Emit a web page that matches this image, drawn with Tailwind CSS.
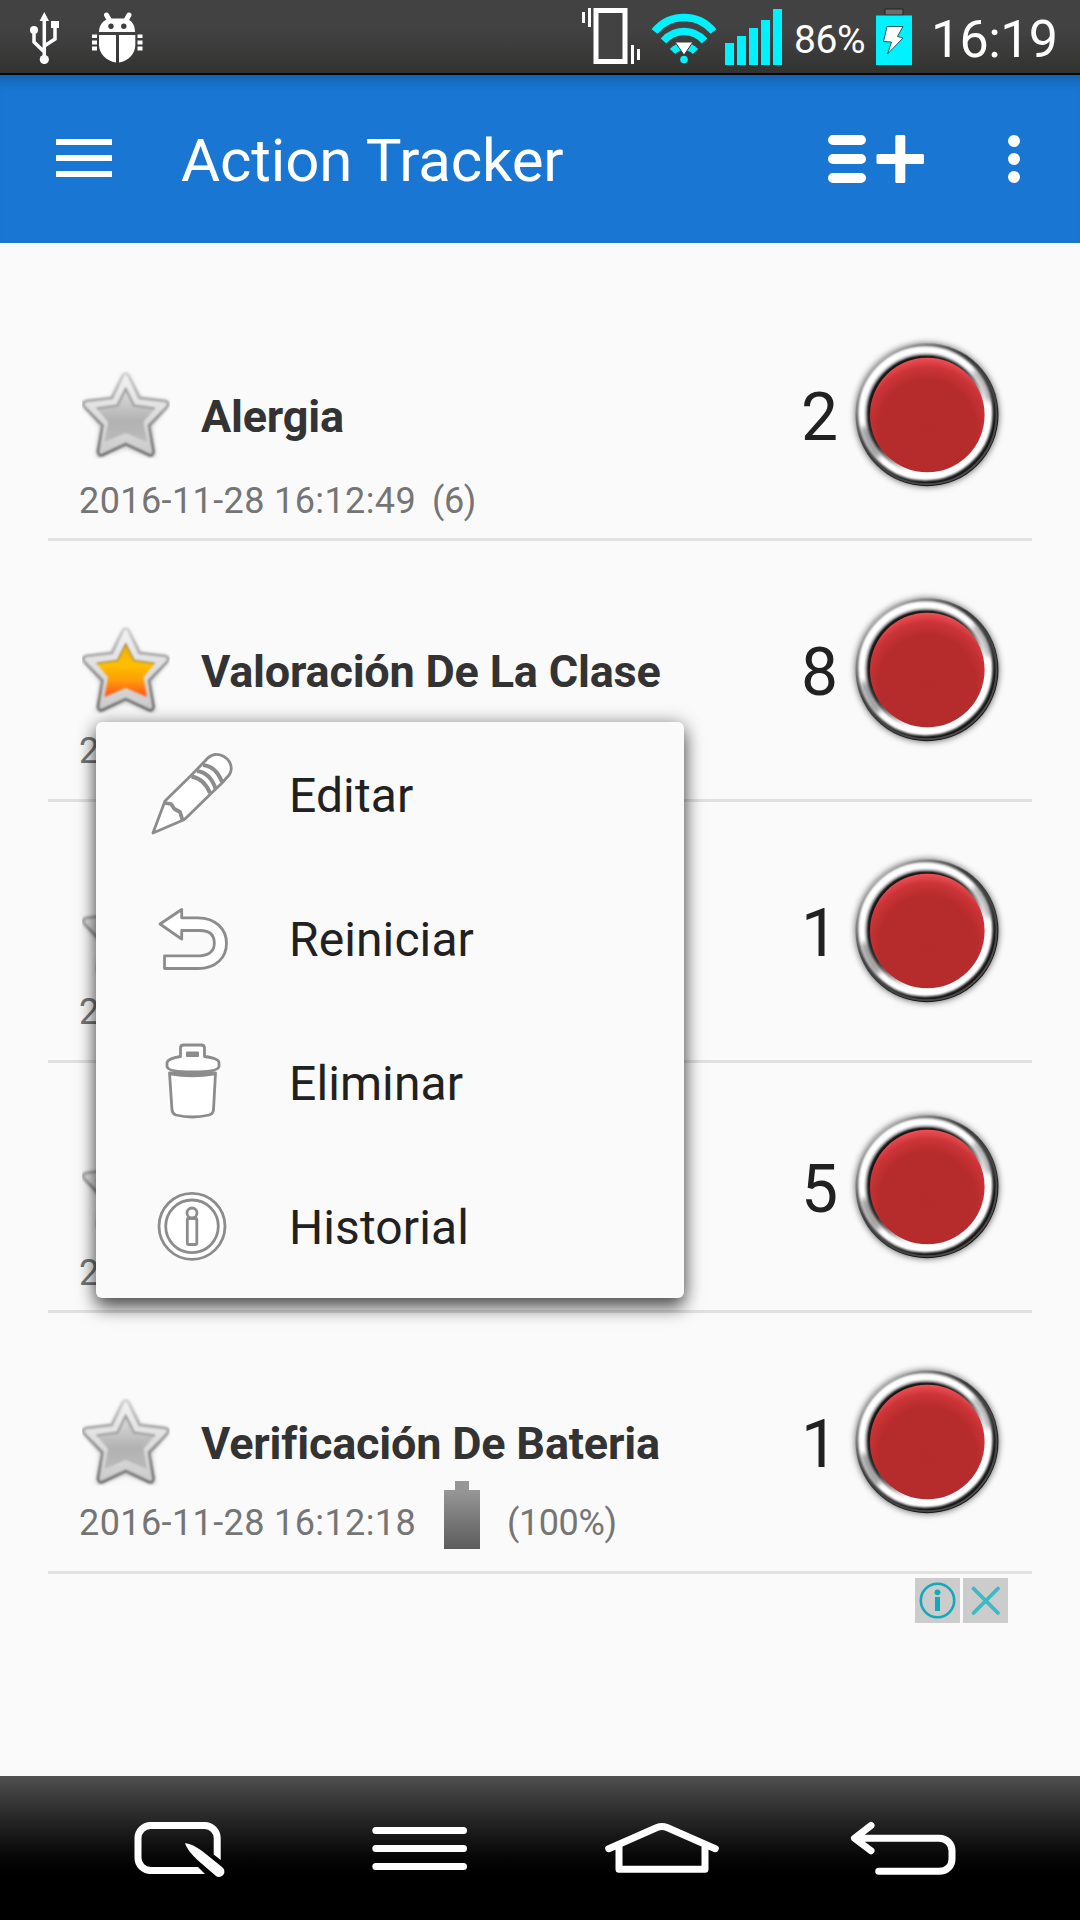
<!DOCTYPE html>
<html lang="es">
<head>
    <meta charset="UTF-8">
    <meta name="viewport" content="width=device-width, initial-scale=1.0">
    <title>Action Tracker</title>
    <script src="https://cdn.jsdelivr.net/npm/@tailwindcss/browser@4"></script>
    <style>
        body {
            font-family: Roboto, 'Noto Sans', sans-serif;
        }
    </style>
</head>
<body class="bg-[#fafafa]">

    <!-- shared shapes -->
    <svg class="absolute w-0 h-0" aria-hidden="true">
        <defs>
            <linearGradient id="starEdge" x1="0" y1="0" x2="0" y2="1">
                <stop offset="0" stop-color="#cfcfcf"/>
                <stop offset="0.5" stop-color="#8e8e8e"/>
                <stop offset="1" stop-color="#666"/>
            </linearGradient>
            <linearGradient id="starRim" x1="0" y1="0" x2="0" y2="1">
                <stop offset="0" stop-color="#f2f2f2"/>
                <stop offset="1" stop-color="#cbcbcb"/>
            </linearGradient>
            <linearGradient id="starGrey" x1="0" y1="0" x2="0" y2="1">
                <stop offset="0" stop-color="#dedede"/>
                <stop offset="0.6" stop-color="#b2b2b2"/>
                <stop offset="1" stop-color="#bababa"/>
            </linearGradient>
            <linearGradient id="starGold" x1="0" y1="0" x2="0" y2="1">
                <stop offset="0" stop-color="#f0b000"/>
                <stop offset="0.4" stop-color="#ffc000"/>
                <stop offset="0.7" stop-color="#ff9a08"/>
                <stop offset="1" stop-color="#ff4d1c"/>
            </linearGradient>
            <linearGradient id="bezel" x1="0.15" y1="0.1" x2="0.7" y2="0.8">
                <stop offset="0" stop-color="#bdbdbd"/>
                <stop offset="0.45" stop-color="#4a4a4a"/>
                <stop offset="1" stop-color="#161616"/>
            </linearGradient>
            <linearGradient id="bezelLine" x1="0.1" y1="0.1" x2="0.8" y2="0.9">
                <stop offset="0" stop-color="#a8a8a8"/>
                <stop offset="0.4" stop-color="#3a3a3a"/>
                <stop offset="1" stop-color="#4c4c4c"/>
            </linearGradient>
            <linearGradient id="lip" x1="0.15" y1="0.1" x2="0.75" y2="0.8">
                <stop offset="0" stop-color="#101010"/>
                <stop offset="0.5" stop-color="#303030"/>
                <stop offset="0.85" stop-color="#fff"/>
            </linearGradient>
            <radialGradient id="redCap" cx="0.5" cy="0.62" r="0.64">
                <stop offset="0" stop-color="#b52a2a"/>
                <stop offset="0.66" stop-color="#b62b2b"/>
                <stop offset="0.84" stop-color="#cc3438"/>
                <stop offset="0.97" stop-color="#ee5055"/>
            </radialGradient>
            <filter id="soft" x="-20%" y="-20%" width="140%" height="140%">
                <feGaussianBlur stdDeviation="3"/>
            </filter>
            <filter id="fine" x="-10%" y="-10%" width="120%" height="120%">
                <feGaussianBlur stdDeviation="0.8"/>
            </filter>
            <filter id="glint" x="-100%" y="-100%" width="300%" height="300%">
                <feGaussianBlur stdDeviation="2.5"/>
            </filter>
        </defs>

        <symbol id="star" viewBox="0 0 88 88">
            <path d="M43.700 4 L57 28 L84 32 L67 54 L71 83 L43.700 73 L16.500 83 L20.500 54 L3.500 32 L30.500 28 Z" transform="translate(0 1)" fill="none" stroke="#000" stroke-opacity="0.25" stroke-width="4" stroke-linejoin="round" filter="url(#glint)"/>
            <path d="M41 4.500 Q43.700 0.500 46.500 4.500 L57.500 27 L83 30 Q88.500 31.500 84.500 36.500 L67 54.500 L71.500 80.500 Q71 86 66 83.500 L43.700 73 L21.500 83.500 Q16.500 86 16 80.500 L20.500 54.500 L3 36.500 Q-1 31.500 4.500 30 L30 27 Z" fill="url(#starRim)" stroke="url(#starEdge)" stroke-width="2.600" filter="url(#fine)"/>
        </symbol>

        <symbol id="star-off" viewBox="0 0 88 88">
            <use href="#star" width="88" height="88"/>
            <g filter="url(#fine)">
                <path d="M43.700 18 L52 34.500 L73 37.500 L61.500 51 L65 71 L43.700 62 L22.500 71 L26 51 L14.500 37.500 L35.500 34.500 Z" fill="url(#starGrey)"/>
                <path d="M14.500 37.500 L35.500 34.500 L43.700 18 L52 34.500 L73 37.500" fill="none" stroke="#9c9c9c" stroke-width="2.200"/>
            </g>
        </symbol>

        <symbol id="star-on" viewBox="0 0 88 88">
            <use href="#star" width="88" height="88"/>
            <g filter="url(#fine)">
                <path d="M43.700 18 L52 34.500 L73 37.500 L61.500 51 L65 71 L43.700 62 L22.500 71 L26 51 L14.500 37.500 L35.500 34.500 Z" fill="url(#starGold)"/>
                <path d="M14.500 37.500 L35.500 34.500 L43.700 18 L52 34.500 L73 37.500" fill="none" stroke="#a98a3c" stroke-width="1.600"/>
            </g>
        </symbol>

        <symbol id="button" viewBox="0 0 160 160">
            <circle cx="80" cy="80" r="72" fill="#000" fill-opacity="0.55" filter="url(#soft)"/>
            <circle cx="80" cy="79.700" r="71.500" fill="url(#bezel)"/>
            <circle cx="80" cy="79.700" r="69.500" fill="none" stroke="url(#bezelLine)" stroke-width="2"/>
            <g filter="url(#fine)">
                <circle cx="78.400" cy="78.400" r="63.500" fill="none" stroke="#fff" stroke-width="7"/>
                <path d="M127 36 A66 66 0 0 1 143 66" fill="none" stroke="#555" stroke-opacity="0.75" stroke-width="4" filter="url(#glint)"/>
                <path d="M17 92 A64 64 0 0 0 32 122" fill="none" stroke="#444" stroke-opacity="0.75" stroke-width="5" filter="url(#glint)"/>
                <circle cx="79.500" cy="79.500" r="60" fill="url(#lip)"/>
            </g>
            <circle cx="80.300" cy="80" r="57.300" fill="url(#redCap)"/>
        </symbol>
    </svg>

    <div class="relative w-[1080px] h-[1920px] flex flex-col overflow-hidden">

        <!-- status bar -->
        <div class="h-[75px] shrink-0 flex items-start bg-linear-to-b from-[#424242] from-40% to-[#323331] border-b-2 border-[#05070c]">
            <svg class="ml-[24px] mt-[8px] w-[42px] h-[60px] shrink-0" viewBox="0 0 42 60" fill="none" stroke="#fff" stroke-width="3.500">
                <path d="M20.300 10 V52 M10 24 V34 L20.300 44 M31 18 V31 L20.300 38"/>
                <path d="M20.300 4 L25 13 H15.600 Z M27 13 h8 v7 h-8 Z" fill="#fff" stroke="none"/>
                <circle cx="10" cy="22" r="4" fill="#fff" stroke="none"/>
                <circle cx="20.300" cy="51.500" r="4.600" fill="#fff" stroke="none"/>
            </svg>
            <svg class="ml-[24px] mt-[8px] w-[56px] h-[60px] shrink-0" viewBox="0 0 56 60" fill="#fff">
                <path d="M16.500 7 L21 15 M39 7 L34.500 15" stroke="#fff" stroke-width="5" stroke-linecap="round"/>
                <path d="M9 24 C9 15.500 15 10.500 22 10.500 H33.500 C40 10.500 45 15.500 45 24 Z"/>
                <circle cx="21" cy="18.300" r="2.700" fill="#3e3e3e"/>
                <circle cx="33.800" cy="18.300" r="2.700" fill="#3e3e3e"/>
                <path d="M9 27 H26 V54.500 C16 53 9 45 9 37 Z M29 27 H45.300 V37 C45.300 45 39 53 29 54.500 Z"/>
                <path d="M2 26.500 h5 v3.500 h-5 Z M2 32.500 h5 v4 h-5 Z M2 38.500 h5 v4 h-5 Z M47.500 26.500 h5 v3.500 h-5 Z M47.500 32.500 h5 v4 h-5 Z M47.500 38.500 h5 v4 h-5 Z"/>
            </svg>
            <svg class="ml-auto mt-[4px] w-[64px] h-[64px] shrink-0" viewBox="0 0 64 64">
                <rect x="18" y="6.500" width="29" height="51" fill="#424242" stroke="#fff" stroke-width="5"/>
                <path d="M5.500 8 V19 M11.500 4 V23 M54.500 41 V60 M60.500 45 V56" stroke="#fff" stroke-width="3"/>
            </svg>
            <svg class="ml-[8px] mt-[9px] w-[68px] h-[58px] shrink-0" viewBox="0 0 68 58" fill="none" stroke="#00f2ff">
                <path d="M4.500 22.500 A38 38 0 0 1 63.500 22.500" stroke-width="7.500"/>
                <path d="M13.500 32 A27 27 0 0 1 54.500 32" stroke-width="7.500"/>
                <path d="M22.500 42.500 A16 16 0 0 1 45.500 42.500" stroke-width="7.500"/>
                <circle cx="34" cy="50.500" r="3.800" fill="#00f2ff" stroke="none"/>
                <path d="M25 33 H43 L34 46 Z" fill="#fff" stroke="#3a3a3a" stroke-width="1"/>
            </svg>
            <svg class="ml-[6px] mt-[8px] w-[60px] h-[58px] shrink-0" viewBox="0 0 60 58" fill="#00f2ff">
                <rect x="1" y="35" width="9" height="22"/>
                <rect x="13" y="28" width="9" height="29"/>
                <rect x="25" y="20" width="9" height="37"/>
                <rect x="37" y="12" width="9" height="45"/>
                <rect x="49" y="1" width="9" height="56"/>
            </svg>
            <span class="ml-[10px] mt-[17px] w-[75px] shrink-0 text-[39px] leading-[46px] text-white whitespace-nowrap tracking-[-0.4px]">86%</span>
            <svg class="ml-[6px] mt-[8px] w-[38px] h-[58px] shrink-0" viewBox="0 0 38 58">
                <path d="M10 1 H28 V7 H10 Z" fill="#6d6d6d" stroke="#222" stroke-width="1"/>
                <rect x="1" y="7.500" width="36" height="49.500" fill="#00f2ff"/>
                <path d="M12 18.500 H28 L22.500 28.500 L28 30 L12.500 46 L16.500 34 L8.500 33.500 Z" fill="#fff" stroke="#145c60" stroke-width="1"/>
            </svg>
            <span class="ml-[18px] mr-[21px] mt-[9px] w-[128px] shrink-0 text-[52px] leading-[61px] text-white whitespace-nowrap tracking-[-0.6px]">16:19</span>
        </div>

        <!-- toolbar -->
        <div class="h-[168px] shrink-0 flex items-center bg-[#1976d2] shadow-[inset_0_14px_14px_-12px_rgba(0,0,0,0.3)]">
            <div class="ml-[56px] w-[56px] mb-[2px] flex flex-col gap-[10px]">
                <div class="h-[6px] bg-white"></div>
                <div class="h-[6px] bg-white"></div>
                <div class="h-[6px] bg-white"></div>
            </div>
            <h1 class="ml-[69px] mt-[3px] text-[60px] leading-none text-white whitespace-nowrap tracking-[-0.15px]">Action Tracker</h1>
            <svg class="ml-auto w-[98px] h-[50px]" viewBox="0 0 98 50" stroke="#fff" stroke-width="10">
                <path d="M6 6 H34 M6 25 H34 M6 44 H34" stroke-linecap="round"/>
                <rect x="49.500" y="20" width="47.500" height="10" rx="1.500" fill="#fff" stroke="none"/>
                <rect x="68.300" y="1" width="10" height="48" rx="1.500" fill="#fff" stroke="none"/>
            </svg>
            <div class="ml-[83px] mr-[60px] flex flex-col gap-[6px]">
                <div class="w-3 h-3 rounded-full bg-white"></div>
                <div class="w-3 h-3 rounded-full bg-white"></div>
                <div class="w-3 h-3 rounded-full bg-white"></div>
            </div>
        </div>

        <!-- action list -->
        <ul class="mx-[48px] pt-[48px] flex flex-col">
            <li class="h-[250px] flex border-b-3 border-[#e0e0e0]">
                <div class="flex-1 pl-[31px] pt-[80px]">
                    <div class="h-[88px] flex items-center">
                        <svg class="ml-[3px] w-[88px] h-[88px]"><use href="#star-off"/></svg>
                        <h2 class="ml-[31px] pt-[2px] text-[45px] leading-none font-bold text-[#333] whitespace-nowrap tracking-[-0.2px]">Alergia</h2>
                    </div>
                    <div class="h-[84px] flex items-center text-[36px] leading-none text-[#757575] whitespace-nowrap">
                        <span class="w-[353px] tracking-[0.4px]">2016-11-28 16:12:49</span>
                        <span class="tracking-[-0.4px]">(6)</span>
                    </div>
                </div>
                <div class="flex items-center pr-[25px]">
                    <span class="w-[46px] pt-[6px] text-[66px] leading-none text-[#212121]">2</span>
                    <svg class="w-[160px] h-[160px]"><use href="#button"/></svg>
                </div>
            </li>
            <li class="h-[261px] flex border-b-3 border-[#e0e0e0]">
                <div class="flex-1 pl-[31px] pt-[85px]">
                    <div class="h-[88px] flex items-center">
                        <svg class="ml-[3px] w-[88px] h-[88px]"><use href="#star-on"/></svg>
                        <h2 class="ml-[31px] pt-[2px] text-[45px] leading-none font-bold text-[#333] whitespace-nowrap tracking-[-0.2px]">Valoración De La Clase</h2>
                    </div>
                    <div class="h-[74px] flex items-center text-[36px] leading-none text-[#757575] whitespace-nowrap">
                        <span>2016-11-28</span>
                    </div>
                </div>
                <div class="flex items-center pr-[25px]">
                    <span class="w-[46px] pt-[6px] text-[66px] leading-none text-[#212121]">8</span>
                    <svg class="w-[160px] h-[160px]"><use href="#button"/></svg>
                </div>
            </li>
            <li class="h-[261px] flex border-b-3 border-[#e0e0e0]">
                <div class="flex-1 pl-[31px] pt-[86px]">
                    <div class="h-[88px] flex items-center">
                        <svg class="ml-[3px] w-[88px] h-[88px]"><use href="#star-off"/></svg>
                    </div>
                    <div class="h-[72px] flex items-center text-[36px] leading-none text-[#757575] whitespace-nowrap">
                        <span>2016-11-28</span>
                    </div>
                </div>
                <div class="flex items-center pr-[25px]">
                    <span class="w-[46px] pt-[6px] text-[66px] leading-none text-[#212121]">1</span>
                    <svg class="w-[160px] h-[160px]"><use href="#button"/></svg>
                </div>
            </li>
            <li class="h-[250px] flex border-b-3 border-[#e0e0e0]">
                <div class="flex-1 pl-[31px] pt-[80px]">
                    <div class="h-[88px] flex items-center">
                        <svg class="ml-[3px] w-[88px] h-[88px]"><use href="#star-off"/></svg>
                    </div>
                    <div class="h-[84px] flex items-center text-[36px] leading-none text-[#757575] whitespace-nowrap">
                        <span>2016-11-28</span>
                    </div>
                </div>
                <div class="flex items-center pr-[25px]">
                    <span class="w-[46px] pt-[6px] text-[66px] leading-none text-[#212121]">5</span>
                    <svg class="w-[160px] h-[160px]"><use href="#button"/></svg>
                </div>
            </li>
            <li class="h-[261px] flex border-b-3 border-[#e0e0e0]">
                <div class="flex-1 pl-[31px] pt-[85px]">
                    <div class="h-[88px] flex items-center">
                        <svg class="ml-[3px] w-[88px] h-[88px]"><use href="#star-off"/></svg>
                        <h2 class="ml-[31px] pt-[2px] text-[45px] leading-none font-bold text-[#333] whitespace-nowrap tracking-[-0.2px]">Verificación De Bateria</h2>
                    </div>
                    <div class="h-[74px] flex items-center text-[36px] leading-none text-[#757575] whitespace-nowrap">
                        <span class="w-[365px] tracking-[0.4px]">2016-11-28 16:12:18</span>
                        <div class="w-[36px] mb-[16px] flex flex-col items-center">
                            <div class="w-[14px] h-[9px] bg-[#969696]"></div>
                            <div class="w-[36px] h-[59px] bg-linear-to-b from-[#979797] to-[#5c5c5c]"></div>
                        </div>
                        <span class="ml-[27px] tracking-[-0.4px]">(100%)</span>
                    </div>
                </div>
                <div class="flex items-center pr-[25px]">
                    <span class="w-[46px] pt-[6px] text-[66px] leading-none text-[#212121]">1</span>
                    <svg class="w-[160px] h-[160px]"><use href="#button"/></svg>
                </div>
            </li>
        </ul>

        <!-- ad badges -->
        <div class="mt-[4px] mr-[72px] flex justify-end gap-[3px]">
            <svg class="w-[45px] h-[45px] bg-[#ccc]" viewBox="0 0 45 45">
                <circle cx="22.500" cy="22.500" r="16.700" fill="none" stroke="#13a9bd" stroke-width="2.600"/>
                <circle cx="22.500" cy="14.300" r="2.900" fill="#13a9bd"/>
                <rect x="20" y="19" width="5" height="14" fill="#13a9bd"/>
            </svg>
            <svg class="w-[45px] h-[45px] bg-[#ccc]" viewBox="0 0 45 45">
                <path d="M10.500 10.500 L35 35 M35 10.500 L10.500 35" stroke="#3ab9c6" stroke-width="3.800" stroke-linecap="round"/>
            </svg>
        </div>

        <!-- navigation bar -->
        <div class="mt-auto h-[144px] shrink-0 pl-[58px] pr-[56px] pt-[41px] grid grid-cols-4 justify-items-center items-start bg-linear-to-b from-[#505050] to-black to-80%">
            <svg class="w-[120px] h-[66px]" viewBox="0 0 120 66" fill="#fff">
                <path d="M101.700 43 V21 a16 16 0 0 0 -16 -16 H31.500 a16 16 0 0 0 -16 16 V41 a16 16 0 0 0 16 16 H86 L79 50 H31.500 a9 9 0 0 1 -9 -9 V21 a9 9 0 0 1 9 -9 H85.700 a9 9 0 0 1 9 9 V37.500 Z"/>
                <path d="M66 26.300 C70 26 78 30 85 35.500 L103 50 A5 5 0 0 1 97 59 L79 43.500 C73 38 68 32 66 26.300 Z"/>
            </svg>
            <svg class="w-[120px] h-[66px]" viewBox="0 0 120 66" stroke="#fff" stroke-width="7" stroke-linecap="round">
                <path d="M15.800 13.500 H103.500 M15.800 31.500 H103.500 M15.800 49.500 H103.500"/>
            </svg>
            <svg class="w-[120px] h-[66px]" viewBox="0 0 120 66" fill="none" stroke="#fff" stroke-width="7" stroke-linecap="round" stroke-linejoin="round">
                <path d="M6.700 31.700 L55 10.500 Q60 8.500 65 10.500 L113.300 31.700 M17 30 V52.300 H103 V30"/>
            </svg>
            <svg class="w-[120px] h-[66px]" viewBox="0 0 120 66" fill="none" stroke="#fff" stroke-width="7" stroke-linecap="round" stroke-linejoin="round">
                <path d="M28 8.500 L11.500 21.300 L28 33.700 M13 21.300 H96 C104 21.300 109 27 109 34 V42 C109 49 104 54.300 96 54.300 H35.700"/>
            </svg>
        </div>

        <!-- context menu -->
        <ul class="absolute left-[96px] top-[722px] w-[588px] bg-[#fafafa] rounded-md text-[48px] leading-none text-[#212121] tracking-[0.1px] shadow-[0_10px_18px_rgba(0,0,0,0.6),0_0_18px_rgba(0,0,0,0.3)]">
            <li class="h-[144px] pl-[48px] flex items-center gap-[49px]">
                <svg class="w-[96px] h-[96px]" viewBox="0 0 96 96" fill="#fff" stroke="#8c8c8c" stroke-width="2.800" stroke-linejoin="round">
                    <path d="M9 87 L21 55 L47 29.500 L61 15 Q66 9 71 8.500 Q80 8 85.500 16 Q89 22.500 85.500 28.500 L78 37 L65.500 49 L42 72 Q40 74 37 75 Z"/>
                    <path d="M21 57 L27 58 L30.500 63 L36 66 L38.500 74" fill="none" stroke-width="3.800"/>
                    <path d="M47.500 30.500 Q60 32.500 66 47 M53 25 Q66 26.500 71.500 42.500 M59 19 Q72 20.500 78 36" fill="none" stroke-width="4"/>
                </svg>
                <span class="pt-[4px]">Editar</span>
            </li>
            <li class="h-[144px] pl-[48px] flex items-center gap-[49px]">
                <svg class="w-[96px] h-[96px]" viewBox="0 0 96 96" fill="#fff" stroke="#8c8c8c" stroke-width="2.800" stroke-linejoin="round">
                    <path d="M16 34 L37.700 19.500 V27.800 H54 C72 27.800 82.500 39.500 82.500 53.200 C82.500 67.500 72 78.500 54 78.500 H20.500 V65.800 H56 C66 65 70.300 60.500 70.300 53.200 C70.300 44.500 65 40.500 56 40.500 H37.700 V49.200 Z"/>
                </svg>
                <span class="pt-[4px]">Reiniciar</span>
            </li>
            <li class="h-[144px] pl-[48px] flex items-center gap-[49px]">
                <svg class="w-[96px] h-[96px]" viewBox="0 0 96 96" fill="#fff" stroke="#8c8c8c" stroke-width="2.800" stroke-linejoin="round">
                    <path d="M25.500 39 L28 76 Q28.500 80 32 81 Q48 85 65 81 Q69 80 69.500 76 L71.500 39 Z"/>
                    <path d="M26 39.500 Q48 43.500 71 39.500" fill="none" stroke-width="3.500"/>
                    <path d="M36.500 22.500 V14 Q36.500 11 39.500 11 H57 Q60.500 11 60.500 14 V22.500 Q75 24.500 75 28.500 V32.500 Q74 38 48.500 38 Q24 38 23 32.500 V28.500 Q24 24.500 36.500 22.500 Z"/>
                    <rect x="42.500" y="18" width="12" height="4.500" fill="#8c8c8c" stroke-width="1"/>
                </svg>
                <span class="pt-[4px]">Eliminar</span>
            </li>
            <li class="h-[144px] pl-[48px] flex items-center gap-[49px]">
                <svg class="w-[96px] h-[96px]" viewBox="0 0 96 96" fill="#fff" stroke="#8c8c8c" stroke-width="2.800">
                    <circle cx="48" cy="48.300" r="33"/>
                    <circle cx="48" cy="48.300" r="26.300"/>
                    <rect x="43.300" y="40.500" width="9.500" height="26" rx="1"/>
                    <circle cx="48" cy="35" r="5"/>
                </svg>
                <span class="pt-[4px]">Historial</span>
            </li>
        </ul>

    </div>

</body>
</html>
